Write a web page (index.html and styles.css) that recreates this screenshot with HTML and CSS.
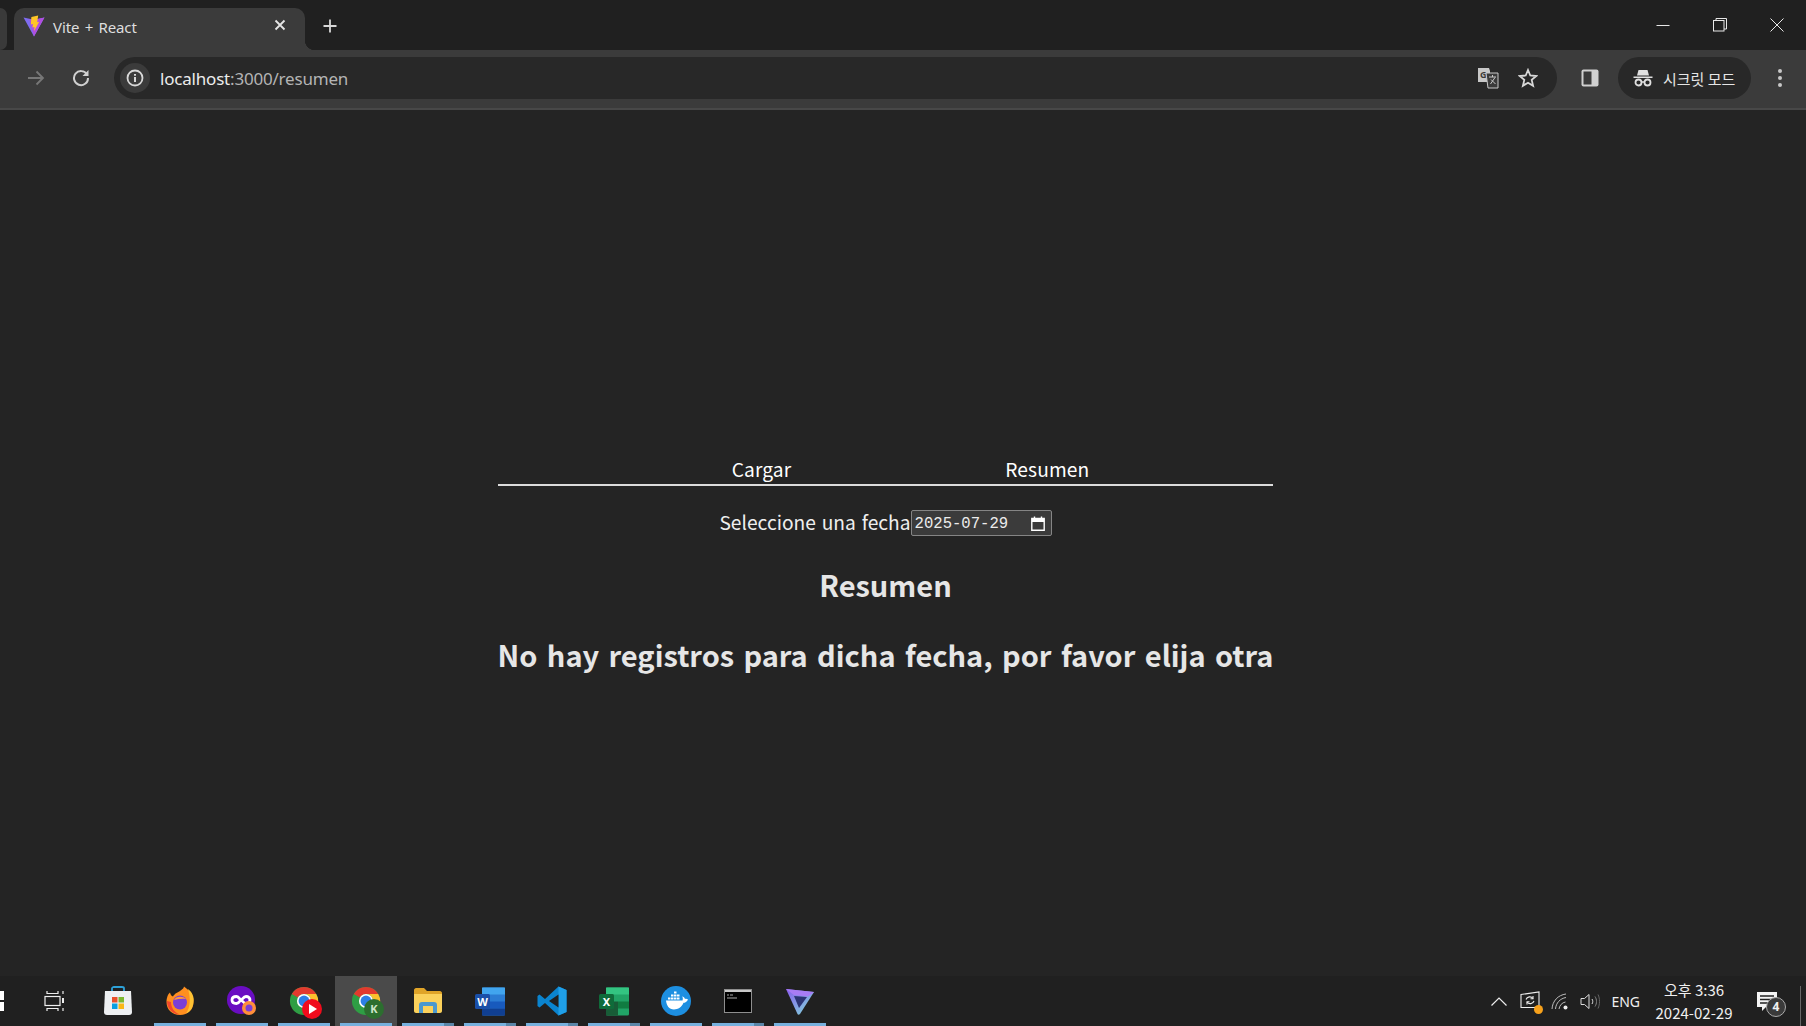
FILE: index.html
```html
<!DOCTYPE html>
<html lang="es">
<head>
  <meta charset="UTF-8" />
  <title>Vite + React</title>
  <link rel="stylesheet" href="styles.css">
</head>
<body>
  <svg class="defs" width="0" height="0">
    <symbol id="chrome" viewBox="0 0 32 32">
      <circle cx="16" cy="16" r="15" fill="#2f9e44"/>
      <path d="M3 8.5A15 15 0 0 1 29 8.5H16A7.5 7.5 0 0 0 9.500 12.300Z" fill="#e23a2e"/>
      <path d="M29 8.500A15 15 0 0 1 16 31L22.500 19.800A7.500 7.500 0 0 0 22.500 12.200 7.500 7.500 0 0 0 16 8.500Z" fill="#fbc02d"/>
      <circle cx="16" cy="16" r="7.500" fill="#fff"/>
      <circle cx="16" cy="16" r="5.800" fill="#2d7fe6"/>
    </symbol>
  </svg>

  <header class="browser">
    <div class="tabstrip">
      <div class="tab-stub"></div>
      <div class="tab">
        <svg class="favicon" width="22" height="22" viewBox="0 0 21 21">
          <path d="M0.500 2.500L10.500 20.500 20.500 2.500 10.500 4.500Z" fill="#7f6cf0"/>
          <path d="M10.500 20.500L6 4 10.500 4.500 20.500 2.500Z" fill="#b14fe0"/>
          <path d="M14.500 0.500L8 2 7.500 9 9.500 8.500 9 12 11 11.500 10.500 15.500 15.500 6.500 13.500 7Z" fill="#ffc627"/>
        </svg>
        <span class="tab-title">Vite + React</span>
        <svg class="tab-close" width="12" height="12" viewBox="0 0 12 12">
          <path d="M1.500 1.500L10.500 10.500M10.500 1.500L1.500 10.500" stroke="#e6e6e6" stroke-width="1.800"/>
        </svg>
      </div>
      <svg class="new-tab" width="14" height="14" viewBox="0 0 14 14">
        <path d="M7 0.500V13.500M0.500 7H13.500" stroke="#d8d8d8" stroke-width="1.800"/>
      </svg>
      <div class="window-controls">
        <svg width="14" height="14" viewBox="0 0 14 14"><path d="M0.500 7.500H13.500" stroke="#e8e8e8"/></svg>
        <svg width="14" height="14" viewBox="0 0 14 14" fill="none" stroke="#e8e8e8"><rect x="0.500" y="2.500" width="10.500" height="10.500"/><path d="M3 2.500V0.500H13.500V11H11"/></svg>
        <svg width="14" height="14" viewBox="0 0 14 14"><path d="M0.500 0.500L13.500 13.500M13.500 0.500L0.500 13.500" stroke="#e8e8e8"/></svg>
      </div>
    </div>

    <div class="toolbar">
      <svg class="nav-back" width="18" height="16" viewBox="0 0 18 16" fill="none" stroke="#777" stroke-width="1.800">
        <path d="M1 8H16M9.500 1.500L16 8 9.500 14.500"/>
      </svg>
      <svg class="nav-reload" width="18" height="18" viewBox="0 0 18 18" fill="none">
        <path d="M15 5.500A7 7 0 1 0 16 9" stroke="#d0d0d0" stroke-width="2"/>
        <path d="M16.500 1V7H10.500Z" fill="#d0d0d0"/>
      </svg>
      <div class="omnibox">
        <span class="site-info">
          <svg width="18" height="18" viewBox="0 0 18 18">
            <circle cx="9" cy="9" r="7.500" fill="none" stroke="#d8d8d8" stroke-width="1.800"/>
            <path d="M9 8V13M9 5V6.800" stroke="#d8d8d8" stroke-width="2"/>
          </svg>
        </span>
        <span class="url"><span class="url-host">localhost</span>:3000/resumen</span>
        <svg class="omni-translate" width="22" height="22" viewBox="0 0 22 22">
          <path d="M1 1H12L13 4V15H1Z" fill="#c8c8c8"/>
          <text x="3" y="11" class="translate-g">G</text>
          <path d="M9 6H21V21H11Z" fill="#3a3a3a" stroke="#c8c8c8"/>
          <path d="M12 10H19M15.500 8V10M13.500 17L18 10.500M14 12.500L18.500 17" stroke="#c8c8c8" stroke-width="1" fill="none"/>
        </svg>
        <svg class="omni-star" width="20" height="20" viewBox="0 0 20 20">
          <path d="M10 2L12.300 7.500 18.300 8 13.700 11.900 15.100 17.800 10 14.700 4.900 17.800 6.300 11.900 1.700 8 7.700 7.500Z" fill="none" stroke="#d8d8d8" stroke-width="1.800"/>
        </svg>
      </div>
      <svg class="side-panel" width="18" height="18" viewBox="0 0 18 18">
        <rect x="0.500" y="0.500" width="17" height="17" rx="2" fill="#d0d0d0"/>
        <rect x="2.500" y="2.500" width="8" height="13" fill="#3b3b3b"/>
      </svg>
      <div class="incognito">
        <svg width="20" height="18" viewBox="0 0 20 18">
          <path d="M5.500 1H14.500L16 6.500H4ZM0.500 7.500H19.500V9H0.500Z" fill="#e0e0e0"/>
          <circle cx="5.500" cy="13.500" r="3" fill="none" stroke="#e0e0e0" stroke-width="1.800"/>
          <circle cx="14.500" cy="13.500" r="3" fill="none" stroke="#e0e0e0" stroke-width="1.800"/>
          <path d="M8.500 13H11.500" stroke="#e0e0e0" stroke-width="1.500"/>
        </svg>
        <span>시크릿 모드</span>
      </div>
      <div class="menu-dots"><i></i><i></i><i></i></div>
    </div>
  </header>

  <main class="page">
    <div class="app">
      <nav class="tabs-nav">
        <a class="nav-link">Cargar</a>
        <a class="nav-link">Resumen</a>
      </nav>
      <div class="date-row">
        <label class="date-label">Seleccione una fecha</label><div class="date-input">
          <span class="date-value">2025-07-29</span>
          <svg width="14" height="15" viewBox="0 0 14 15" fill="none" stroke="#fff">
            <path d="M0.800 2.500H13.200V14.200H0.800Z" stroke-width="1.400"/>
            <path d="M0.800 4.500H13.200" stroke-width="3"/>
            <path d="M3.500 0.500V2.500M10.500 0.500V2.500" stroke-width="1.400"/>
          </svg>
        </div>
      </div>
      <h2 class="title">Resumen</h2>
      <h2 class="title title-empty">No hay registros para dicha fecha, por favor elija otra</h2>
    </div>
  </main>

  <footer class="taskbar">
    <div class="start"><i></i><i></i></div>
    <div class="tb-item tb-task">
      <svg width="20" height="20" viewBox="0 0 20 20" fill="none" stroke="#eee" stroke-width="1.200">
        <path d="M3 0V2.500H14V0M3 20V17.500H14V20"/>
        <rect x="1" y="5.500" width="15" height="9"/>
        <path d="M19 0V3M19 17V20"/><rect x="18" y="7" width="2" height="5" fill="#eee" stroke="none"/>
      </svg>
    </div>
    <div class="tb-item tb-store">
      <svg width="30" height="30" viewBox="0 0 30 30">
        <path d="M9 6V2.500C9 1.500 10 1 11 1H19C20 1 21 1.500 21 2.500V6" fill="none" stroke="#2da1d8" stroke-width="1.800"/>
        <path d="M2 5H28L29 26C29 28 28 29 26 29H4C2 29 1 28 1 26Z" fill="#eef0f2"/>
        <rect x="9" y="11" width="5.500" height="5.500" fill="#e8502a"/><rect x="15.500" y="11" width="5.500" height="5.500" fill="#7cb82f"/>
        <rect x="9" y="17.500" width="5.500" height="5.500" fill="#0a9fe0"/><rect x="15.500" y="17.500" width="5.500" height="5.500" fill="#f9b716"/>
      </svg>
    </div>
    <div class="tb-item">
      <svg width="30" height="30" viewBox="0 0 30 30">
        <path d="M15 29C7 29 1.500 23.500 1.500 16 1.500 12 3 8 5 6.500 5.500 9 6.500 10 8 10.500 10 7 13 6.500 15 5 18 3 19 1.500 19 0.500 24 4 29 9 28.500 16 28.500 23.500 23 29 15 29Z" fill="#ff8f1f"/>
        <path d="M23 3C27 6 29.500 11 28.500 16 28 22 25 26 21 27.500 25 22 26 13 23 3Z" fill="#ffc233"/>
        <path d="M2 15C2 23 8 28.500 15 28.500 10 27 6 22 6 16Z" fill="#f3472c"/>
        <circle cx="15" cy="16.500" r="7" fill="#7b3fd6"/>
        <path d="M9 14C11 10 18 10 21 13 17 12.500 13 13 9 14Z" fill="#ff9c3a"/>
      </svg>
      <b class="run"></b>
    </div>
    <div class="tb-item">
      <svg width="30" height="30" viewBox="0 0 30 30">
        <circle cx="14" cy="14" r="14" fill="#6a0dc2"/>
        <path d="M9.500 10.500C6.500 10.500 5 12.200 5 14S6.500 17.500 9.500 17.500 13 14 14 14 16.500 17.500 19 17.500 23 15.800 23 14 21.500 10.500 19 10.500 15 14 14 14 12 10.500 9.500 10.500Z" fill="none" stroke="#fff" stroke-width="2.800"/>
        <circle cx="22" cy="22" r="7" fill="#ff8f3a"/>
        <circle cx="22" cy="22" r="3.500" fill="#7b3fd6"/>
      </svg>
      <b class="run"></b>
    </div>
    <div class="tb-item">
      <span class="chrome-wrap">
        <svg width="30" height="30"><use href="#chrome"/></svg>
        <svg class="chrome-badge" width="20" height="20" viewBox="0 0 20 20">
          <circle cx="10" cy="10" r="10" fill="#f00c1c"/>
          <path d="M7 5L15 10 7 15Z" fill="#fff"/>
        </svg>
      </span>
      <b class="run"></b>
    </div>
    <div class="tb-item tb-active">
      <span class="chrome-wrap">
        <svg width="30" height="30"><use href="#chrome"/></svg>
        <span class="chrome-badge chrome-badge-k">K</span>
      </span>
      <b class="run"></b>
    </div>
    <div class="tb-item">
      <svg width="28" height="26" viewBox="0 0 28 26">
        <path d="M0 2C0 1 1 0 2 0H10L13 3H26C27 3 28 4 28 5V8H0Z" fill="#e0a428"/>
        <path d="M0 6H28V23C28 24 27 25 26 25H2C1 25 0 24 0 23Z" fill="#fbd15b"/>
        <path d="M5 25V17C5 15 6 14 8 14H20C22 14 23 15 23 17V25H19V18H9V25Z" fill="#4a98cf"/>
      </svg>
      <b class="run"></b><b class="run-more"></b>
    </div>
    <div class="tb-item">
      <svg width="30" height="29" viewBox="0 0 30 29">
        <rect x="7" y="0.500" width="23" height="28" rx="1.500" fill="#2b7cd3"/>
        <rect x="7" y="0.500" width="23" height="7" fill="#41a5ee"/>
        <rect x="7" y="14.500" width="23" height="7" fill="#185abd"/>
        <rect x="7" y="21.500" width="23" height="7" fill="#103f91"/>
        <rect x="0" y="7" width="15" height="15" rx="1.500" fill="#1a4fa8"/>
        <text x="7.500" y="18.500" class="app-letter">W</text>
      </svg>
      <b class="run"></b><b class="run-more"></b>
    </div>
    <div class="tb-item">
      <svg width="30" height="30" viewBox="0 0 30 30">
        <path d="M21.500 0.500L29.500 4V26L21.500 29.500 8 17 2.500 21.500 0.500 20V10L2.500 8.500 8 13Z" fill="#0a84cf"/>
        <path d="M21.500 0.500L29.500 4V26L21.500 29.500Z" fill="#1f9fe8"/>
        <path d="M21.500 8.500L12 15 21.500 21.500Z" fill="#202020"/>
      </svg>
      <b class="run"></b><b class="run-more"></b>
    </div>
    <div class="tb-item">
      <svg width="30" height="29" viewBox="0 0 30 29">
        <rect x="7" y="0.500" width="23" height="28" rx="1.500" fill="#21a366"/>
        <rect x="7" y="0.500" width="12" height="7" fill="#33c481"/>
        <rect x="19" y="0.500" width="11" height="7" fill="#33c481"/>
        <rect x="7" y="14.500" width="12" height="14" fill="#185c37"/>
        <rect x="19" y="14.500" width="11" height="7" fill="#107c41"/>
        <rect x="0" y="7" width="15" height="15" rx="1.500" fill="#0f6b3a"/>
        <text x="7.500" y="18.500" class="app-letter">X</text>
      </svg>
      <b class="run"></b><b class="run-more"></b>
    </div>
    <div class="tb-item">
      <svg width="30" height="30" viewBox="0 0 30 30">
        <circle cx="15" cy="15" r="15" fill="#1d8fe1"/>
        <path d="M5 14.500H21.500C22 13 22 11.500 21 10.500 22.500 10.500 23.500 11.500 24 13 25 12.500 26 12.800 27 13.500 26 16 24 16.800 22.500 16.800 21 21 17 23.500 13 23.500 8 23.500 5.500 19.500 5 14.500Z" fill="#fff"/>
        <path d="M7 11.500H9.500V13.500H7ZM10 11.500H12.500V13.500H10ZM13 11.500H15.500V13.500H13ZM16 11.500H18.500V13.500H16ZM10 8.500H12.500V10.500H10ZM13 8.500H15.500V10.500H13ZM16 8.500H18.500V10.500H16ZM13 5.500H15.500V7.500H13Z" fill="#fff"/>
      </svg>
      <b class="run"></b>
    </div>
    <div class="tb-item">
      <svg width="28" height="24" viewBox="0 0 28 24">
        <rect x="0.500" y="0.500" width="27" height="23" fill="#000" stroke="#8e8e8e"/>
        <rect x="1" y="1" width="26" height="2" fill="#c8c8c8"/>
        <path d="M3 6H5M3 9H13M6 6H9" stroke="#aaa" stroke-width="1"/>
      </svg>
      <b class="run"></b><b class="run-more"></b>
    </div>
    <div class="tb-item">
      <svg width="32" height="28" viewBox="0 0 32 28">
        <defs>
          <linearGradient id="vpn" x1="0" y1="0" x2="1" y2="1">
            <stop offset="0" stop-color="#8a5cf0"/><stop offset="1" stop-color="#7fe0d8"/>
          </linearGradient>
        </defs>
        <path d="M2 2L30 5 16 27C15 28 14 28 13.500 27Z" fill="url(#vpn)"/>
        <path d="M10 9L23 10 15 21Z" fill="#2c3474"/>
        <path d="M2 2L30 5 24 9.500 10 8Z" fill="#a87cf5"/>
      </svg>
      <b class="run"></b>
    </div>

    <div class="tray">
      <svg class="tray-chevron" width="16" height="9" viewBox="0 0 16 9"><path d="M0.500 8.500L8 1 15.500 8.500" fill="none" stroke="#eee" stroke-width="1.200"/></svg>
      <span class="tray-net">
        <svg width="20" height="20" viewBox="0 0 20 20" fill="none" stroke="#eee" stroke-width="1.100">
          <path d="M1 3.500L19 1V16.500H1Z"/>
          <path d="M6 8.500A4 4 0 0 1 13 7.500M14 10A4 4 0 0 1 7 11"/>
          <path d="M13 5V7.800H10.500M7 13.500V10.800H9.500"/>
        </svg>
        <i class="tray-dot"></i>
      </span>
      <svg class="tray-wifi" width="19" height="17" viewBox="0 0 19 17" fill="none" stroke="#bbb">
        <path d="M1 16C1.500 8 7 2 15 1M4.500 16C5 10 9 5.500 15 4.500M8 16C8.500 12.500 11 9.500 14.500 9"/>
        <circle cx="14.500" cy="14.500" r="2" fill="#eee" stroke="none"/>
      </svg>
      <svg class="tray-sound" width="20" height="17" viewBox="0 0 20 17" fill="none" stroke="#ddd">
        <path d="M1 5.500H4.500L9 1.500V15.500L4.500 11.500H1Z"/>
        <path d="M12 6C13 7.500 13 9.500 12 11"/><path d="M15 3.500C17 6.500 17 10.500 15 13.500" stroke="#888"/><path d="M18 1.500C20 5.500 20 11.500 18 15.500" stroke="#666"/>
      </svg>
      <span class="tray-lang">ENG</span>
      <div class="clock">
        <span>오후 3:36</span>
        <span>2024-02-29</span>
      </div>
      <span class="notif">
        <svg width="20" height="19" viewBox="0 0 20 19">
          <path d="M0 0H20V15H9L5 19V15H0Z" fill="#f4f4f4"/>
          <path d="M3 4H17M3 7.500H17M3 11H13" stroke="#202020" stroke-width="1.300"/>
        </svg>
        <span class="notif-count">4</span>
      </span>
      <i class="show-desktop"></i>
    </div>
  </footer>
</body>
</html>
```

FILE: styles.css
```css
* {
  box-sizing: border-box;
}

html, body {
  height: 100%;
}

body {
  margin: 0;
  display: flex;
  flex-direction: column;
  height: 1026px;
  overflow: hidden;
  background: #242424;
  font-family: 'Noto Sans', sans-serif;
}

.defs {
  display: none;
}

/* browser chrome */
.browser {
  flex: none;
  background: #202020;
}

.tabstrip {
  display: flex;
  align-items: flex-end;
  height: 50px;
}

.tab-stub {
  width: 7px;
  height: 42px;
  margin-top: 8px;
  margin-right: 7px;
  background: #3a3a3a;
  border-radius: 0 8px 8px 0;
  align-self: flex-start;
}

.tab {
  position: relative;
  display: flex;
  align-items: center;
  width: 291px;
  height: 42px;
  padding: 0 19px 0 9px;
  background: #3b3b3b;
  border-radius: 10px 10px 0 0;
}

.tab::after {
  content: "";
  position: absolute;
  right: -10px;
  bottom: 0;
  width: 10px;
  height: 10px;
  background: radial-gradient(circle at 100% 0, transparent 10px, #3b3b3b 10.500px);
}

.favicon {
  flex: none;
  margin-top: -7px;
}

.tab-title {
  flex: 1;
  margin-left: 8px;
  margin-top: -5px;
  font-size: 15px;
  letter-spacing: -0.1px;
  word-spacing: 1.500px;
  color: #dedede;
}

.tab-close {
  margin-top: -8px;
}

.new-tab {
  margin: 0 0 17px 18px;
}

.window-controls {
  display: flex;
  gap: 43px;
  margin-left: auto;
  padding: 0 22px 18px 0;
  align-self: flex-end;
}

.toolbar {
  display: flex;
  align-items: center;
  height: 60px;
  padding: 0 0 2px 27px;
  background: #3b3b3b;
  border-bottom: 2px solid #484848;
}

.nav-reload {
  margin-left: 27px;
}

.omnibox {
  display: flex;
  align-items: center;
  width: 1443px;
  height: 42px;
  margin-left: 24px;
  padding-left: 6px;
  background: #282828;
  border-radius: 21px;
}

.site-info {
  display: flex;
  align-items: center;
  justify-content: center;
  width: 30px;
  height: 30px;
  background: #3b3b3b;
  border-radius: 50%;
}

.url {
  flex: 1;
  margin-left: 10px;
  margin-top: 1px;
  font-size: 17px;
  letter-spacing: -0.2px;
  color: #b4b4b4;
}

.url-host {
  color: #ececec;
}

.omni-translate {
  margin-right: 19px;
}

.translate-g {
  font: bold 9px 'Noto Sans', sans-serif;
  fill: #3a3a3a;
}

.omni-star {
  margin-right: 19px;
}

.side-panel {
  margin-left: 24px;
}

.incognito {
  display: flex;
  align-items: center;
  gap: 10px;
  width: 133px;
  height: 42px;
  margin-left: 19px;
  padding-left: 15px;
  background: #282828;
  border-radius: 21px;
  font-family: 'Noto Sans CJK KR', sans-serif;
  font-size: 15px;
  color: #e6e6e6;
}

.menu-dots {
  display: flex;
  flex-direction: column;
  gap: 3px;
  margin-left: 27px;
}

.menu-dots i {
  width: 4px;
  height: 4px;
  background: #c8c8c8;
  border-radius: 50%;
}

/* page */
.page {
  flex: 1;
  display: flex;
  justify-content: center;
  padding: 345px 35px 0 0;
  font-family: 'Noto Sans CJK KR', sans-serif;
  color: rgba(255, 255, 255, 0.87);
}

.app {
  display: flex;
  flex-direction: column;
  align-items: center;
  width: 775px;
}

.tabs-nav {
  display: flex;
  justify-content: center;
  gap: 214px;
  width: 100%;
  height: 31px;
  padding-left: 50px;
  border-bottom: 2px solid #dcdcdc;
}

.nav-link {
  font-size: 19.200px;
  line-height: 28px;
  letter-spacing: 0.100px;
  color: #fff;
}

.date-row {
  display: flex;
  align-items: center;
  margin-top: 24px;
}

.date-label {
  margin-top: -2px;
  font-size: 19.200px;
  word-spacing: 1.500px;
  line-height: 26px;
  color: #eee;
}

.date-input {
  display: flex;
  align-items: center;
  justify-content: space-between;
  width: 141px;
  height: 26px;
  padding: 0 6px 0 3px;
  background: #3b3b3b;
  border: 1px solid #858585;
  border-radius: 2px;
}

.date-value {
  margin-top: 1px;
  font-family: 'Liberation Mono', monospace;
  font-size: 15.600px;
  color: #ececec;
}

.title {
  margin: 30px 0 0;
  font-size: 29px;
  font-weight: 700;
  line-height: 36px;
  color: #e6e6e6;
}

.title-empty {
  margin-top: 34px;
  white-space: nowrap;
  word-spacing: 2.800px;
}

/* windows taskbar */
.taskbar {
  flex: none;
  display: flex;
  align-items: stretch;
  height: 50px;
  background: #202020;
}

.start {
  display: flex;
  flex-direction: column;
  justify-content: center;
  gap: 2px;
  width: 22px;
}

.start i {
  width: 4px;
  height: 9px;
  background: #fff;
}

.tb-item {
  position: relative;
  display: flex;
  align-items: center;
  justify-content: center;
  width: 62px;
}

.tb-task {
  width: 64px;
}

.tb-store {
  margin-left: 1px;
}

.tb-active {
  background: #4a4a4a;
}

.run {
  position: absolute;
  left: 5px;
  right: 5px;
  bottom: 0;
  height: 3px;
  background: #76b0dd;
}

.run-more {
  position: absolute;
  right: 5px;
  bottom: 0;
  width: 10px;
  height: 3px;
  background: #5a86a8;
}

.chrome-wrap {
  position: relative;
  display: flex;
}

.chrome-badge {
  position: absolute;
  right: -3px;
  bottom: -3px;
}

.chrome-badge-k {
  width: 20px;
  height: 20px;
  background: #2c6e2f;
  border-radius: 50%;
  font-size: 11px;
  font-weight: 700;
  line-height: 20px;
  text-align: center;
  color: #cfe6c8;
}

.app-letter {
  font: bold 11px 'Noto Sans', sans-serif;
  fill: #fff;
  text-anchor: middle;
}

.tray {
  display: flex;
  align-items: center;
  margin-left: auto;
  color: #f0f0f0;
}

.tray-net {
  position: relative;
  display: flex;
  margin-left: 13px;
}

.tray-dot {
  position: absolute;
  right: -3px;
  bottom: -3px;
  width: 9px;
  height: 9px;
  background: #f7a11b;
  border-radius: 50%;
}

.tray-wifi {
  margin-left: 11px;
}

.tray-sound {
  margin-left: 10px;
}

.tray-lang {
  margin-left: 11px;
  font-size: 14px;
}

.clock {
  display: flex;
  flex-direction: column;
  align-items: center;
  gap: 4px;
  width: 78px;
  margin-left: 15px;
  font-family: 'Noto Sans CJK KR', sans-serif;
  font-size: 15px;
  line-height: 19px;
}

.notif {
  position: relative;
  display: flex;
  margin-left: 24px;
}

.notif-count {
  position: absolute;
  right: -9px;
  bottom: -6px;
  width: 20px;
  height: 20px;
  background: #3a3a3a;
  border: 1.500px solid #aaa;
  border-radius: 50%;
  font-size: 12px;
  font-weight: 700;
  line-height: 17px;
  text-align: center;
}

.show-desktop {
  align-self: flex-end;
  width: 1px;
  height: 40px;
  margin: 0 5px 0 23px;
  background: #666;
}
```
